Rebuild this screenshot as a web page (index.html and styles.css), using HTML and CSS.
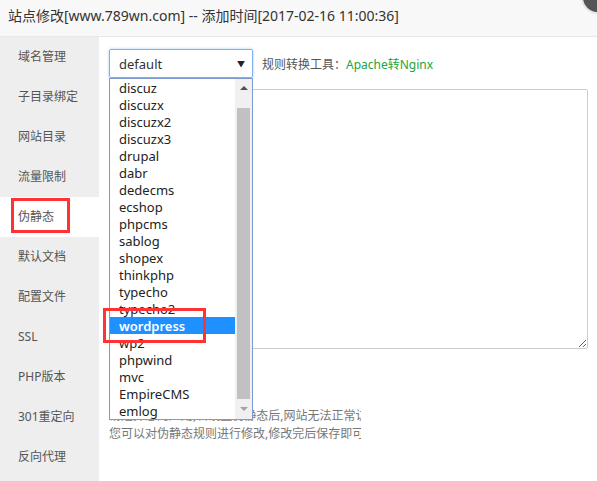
FILE: index.html
```html
<!DOCTYPE html>
<html lang="zh-CN">
<head>
<meta charset="utf-8">
<title>站点修改</title>
<link rel="stylesheet" href="styles.css">
</head>
<body>
<div class="dialog">
  <div class="titlebar">站点修改[www.789wn.com] -- 添加时间[2017-02-16 11:00:36]</div>
  <span class="close-btn"></span>
  <div class="layer-body">
    <ul class="sidebar">
      <li>域名管理</li>
      <li>子目录绑定</li>
      <li>网站目录</li>
      <li>流量限制</li>
      <li class="active">伪静态</li>
      <li>默认文档</li>
      <li>配置文件</li>
      <li>SSL</li>
      <li>PHP版本</li>
      <li>301重定向</li>
      <li>反向代理</li>
    </ul>
    <div class="main">
      <div class="toolbar">
        <div class="select"><span>default</span><span class="caret">▼</span></div>
        <span class="tool-label">规则转换工具：<a class="green">Apache转Nginx</a></span>
      </div>
      <textarea class="rules"></textarea>
      <div class="save-row"></div>
      <ul class="help">
        <li>请选择您的应用,若设置伪静态后,网站无法正常访问,请尝试设置回default</li>
        <li>您可以对伪静态规则进行修改,修改完后保存即可。</li>
      </ul>
    </div>
  </div>

  <div class="dropdown">
    <ul class="options">
      <li>discuz</li>
      <li>discuzx</li>
      <li>discuzx2</li>
      <li>discuzx3</li>
      <li>drupal</li>
      <li>dabr</li>
      <li>dedecms</li>
      <li>ecshop</li>
      <li>phpcms</li>
      <li>sablog</li>
      <li>shopex</li>
      <li>thinkphp</li>
      <li>typecho</li>
      <li>typecho2</li>
      <li class="hl">wordpress</li>
      <li>wp2</li>
      <li>phpwind</li>
      <li>mvc</li>
      <li>EmpireCMS</li>
      <li>emlog</li>
    </ul>
    <div class="scrollbar">
      <span class="arrow up"></span>
      <span class="thumb"></span>
      <span class="arrow down"></span>
    </div>
  </div>

  <span class="mark mark-menu"></span>
  <span class="mark mark-option"></span>
</div>
</body>
</html>
```
FILE: styles.css
```css
* { box-sizing: border-box; }
html, body { margin: 0; padding: 0; background: #fff; }
body {
  font-family: "Noto Sans", "Noto Sans CJK SC", sans-serif;
  color: #333;
}
ul { list-style: none; margin: 0; padding: 0; }

.dialog {
  position: relative;
  width: 597px;
  height: 481px;
  overflow: hidden;
  background: #fff;
}

.titlebar {
  height: 37px;
  line-height: 32px;
  padding-left: 8px;
  font-size: 14px;
  color: #333;
  background: #f8f8f8;
  border-bottom: 1px solid #e8e8e8;
  white-space: nowrap;
}

.close-btn {
  position: absolute;
  left: 581px;
  top: -19px;
  width: 33px;
  height: 33px;
  border-radius: 50%;
  background: #555;
  border: 2px solid #e6e6e6;
}

.layer-body {
  display: flex;
  height: 444px;
}

.sidebar {
  width: 99px;
  flex: none;
  background: #eee;
}
.sidebar li {
  height: 40px;
  line-height: 40px;
  padding-left: 18px;
  font-size: 12px;
  color: #555;
}
.sidebar li.active { background: #fff; }

.main {
  flex: 1;
  padding: 12px 9px 0 10px;
}

.toolbar {
  display: flex;
  align-items: center;
  gap: 9px;
}
.select {
  width: 144px;
  height: 29px;
  border: 1px solid #7fb0e8;
  border-radius: 2px;
  box-shadow: 0 0 3px rgba(102, 175, 233, 0.6);
  display: flex;
  align-items: center;
  justify-content: space-between;
  padding: 0 7px 0 9px;
  font-size: 13px;
  color: #333;
}
.caret { font-size: 8px; color: #222; }
.tool-label { font-size: 12px; color: #555; }
.green { color: #20a53a; }

.rules {
  display: block;
  margin-top: 11px;
  width: 479px;
  height: 260px;
  border: 1px solid #ccc;
  border-radius: 2px;
  resize: vertical;
  background: #fff;
}

.save-row { height: 58px; }

.help {
  width: 252px;
  overflow: hidden;
  font-size: 12px;
  color: #777;
  line-height: 18px;
}
.help li { white-space: nowrap; }

/* open native select list */
.dropdown {
  position: absolute;
  left: 109px;
  top: 78px;
  width: 144px;
  height: 342px;
  border: 1px solid #7a9cd3;
  background: #fff;
  display: flex;
}
.options {
  flex: 1;
  font-size: 13px;
  color: #222;
}
.options li {
  height: 17px;
  line-height: 19px;
  padding-left: 9px;
  overflow: hidden;
}
.options li.hl {
  background: #1e90ff;
  color: #fff;
  font-weight: 600;
}
.scrollbar {
  width: 17px;
  flex: none;
  background: #f0f0f0;
  display: flex;
  flex-direction: column;
  align-items: center;
}
.arrow {
  width: 0;
  height: 0;
  border-left: 4px solid transparent;
  border-right: 4px solid transparent;
}
.arrow.up {
  margin-top: 7px;
  border-bottom: 4px solid #505050;
}
.arrow.down {
  margin-top: 8px;
  border-top: 4px solid #a3a3a3;
}
.thumb {
  margin-top: 18px;
  width: 13px;
  height: 291px;
  background: #c1c1c1;
}

.mark {
  position: absolute;
  border: 3px solid #f33;
}
.mark-menu { left: 11px; top: 198px; width: 59px; height: 35px; }
.mark-option { left: 103px; top: 308px; width: 103px; height: 35px; }
```
